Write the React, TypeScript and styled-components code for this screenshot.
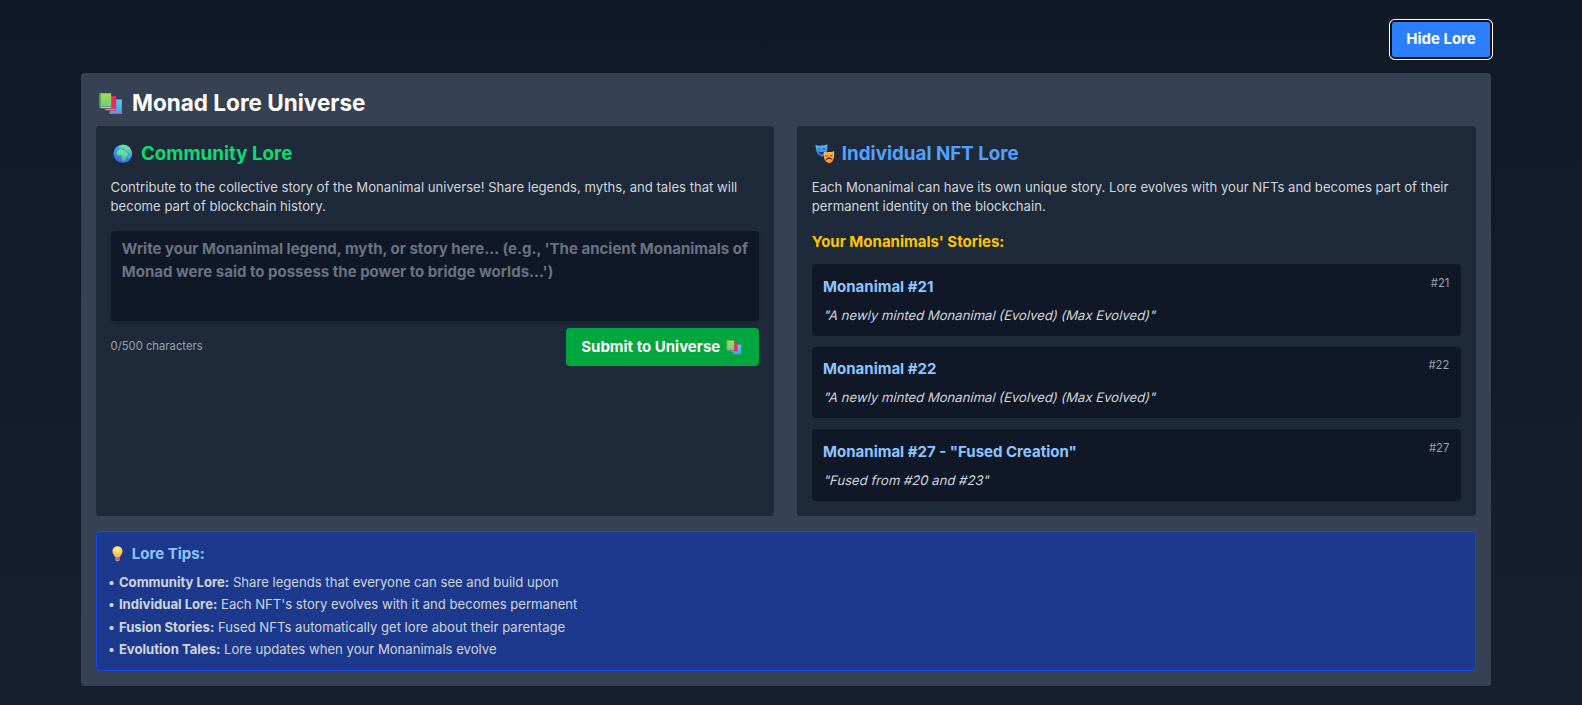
import React from "react";
import styled, { createGlobalStyle } from "styled-components";

const GlobalStyle = createGlobalStyle`
  *, *::before, *::after { box-sizing: border-box; }
  html { font-size: 15px; height: 100%; overflow: hidden; }
  body {
    margin: 0;
    min-height: 705px;
    font-family: Inter, "Liberation Sans", sans-serif;
    line-height: 1.5;
    color: #fff;
    background: linear-gradient(to bottom, #111827, #162030);
  }
  h2, h3, h4, p, ul { margin: 0; padding: 0; }
`;

const Page = styled.div`
  width: 1410px;
  margin-left: 80.6px;
  padding-top: 21px;
  display: flex;
  flex-direction: column;
  gap: 1rem;
`;

const Toolbar = styled.div`
  display: flex;
  justify-content: flex-end;
  margin-right: -0.4px;
`;

const Button = styled.button<{ $tone: "blue" | "green"; $focused?: boolean }>`
  border: 0;
  margin: 0;
  height: ${(p) => (p.$focused ? "37px" : "2.5rem")};
  min-width: 100px;
  justify-content: center;
  padding: 0 1rem;
  display: flex;
  align-items: center;
  border-radius: 0.25rem;
  font: 700 1rem/1.5 Inter, "Liberation Sans", sans-serif;
  white-space: nowrap;
  color: #fff;
  background: ${(p) => (p.$tone === "blue" ? "#2b7fff" : "#00a63e")};
  box-shadow: ${(p) =>
    p.$focused ? "inset 0 0 0 1px #101010, 0 0 0 1px #101010, 0 0 0 2px #fff" : "none"};
`;

const Panel = styled.section`
  padding: 1rem;
  border-radius: 0.25rem;
  background: #364153;
`;

const PanelTitle = styled.h2`
  display: flex;
  align-items: center;
  margin-bottom: 0.5rem;
  font-size: 1.5rem;
  line-height: 2rem;
  font-weight: 700;
`;

const Columns = styled.div`
  display: grid;
  grid-template-columns: 1fr 1fr;
  gap: 1.5rem;
  margin-bottom: 1rem;
`;

const Card = styled.div`
  padding: 1rem;
  border-radius: 0.25rem;
  background: #1e2939;
`;

const CardTitle = styled.h3<{ $color: string }>`
  display: flex;
  align-items: center;
  margin-bottom: 0.75rem;
  font-size: 1.25rem;
  line-height: 1.75rem;
  font-weight: 700;
  color: ${(p) => p.$color};
`;

const Intro = styled.p`
  margin-bottom: 1rem;
  font-size: 0.875rem;
  line-height: 1.25rem;
  color: #d1d5dc;
`;

const StoryInput = styled.textarea`
  display: block;
  width: 100%;
  height: 6rem;
  padding: 0.5rem 0.75rem;
  border: 0;
  border-radius: 0.25rem;
  resize: none;
  outline: none;
  overflow: hidden;
  font: 700 1rem/1.5 Inter, "Liberation Sans", sans-serif;
  color: #fff;
  background: #101828;
  box-shadow: 0 1px 3px rgba(0, 0, 0, 0.1), 0 1px 2px rgba(0, 0, 0, 0.1);
  &::placeholder { color: #6a7282; opacity: 1; }
`;

const FormFooter = styled.div`
  display: flex;
  align-items: center;
  justify-content: space-between;
  margin-top: 0.5rem;
`;

const Small = styled.span`
  font-size: 0.75rem;
  line-height: 1rem;
  color: #99a1af;
`;

const SubTitle = styled.h4<{ $color: string; $gap: string }>`
  display: flex;
  align-items: center;
  margin-bottom: ${(p) => p.$gap};
  font-size: 1rem;
  line-height: 1.5rem;
  font-weight: 700;
  color: ${(p) => p.$color};
`;

const Stories = styled.div`
  display: flex;
  flex-direction: column;
  gap: 0.75rem;
`;

const Story = styled.article`
  padding: 0.75rem;
  border-radius: 0.25rem;
  background: #101828;
`;

const StoryHead = styled.div`
  display: flex;
  justify-content: space-between;
  align-items: flex-start;
`;

/* Slants the upright letterforms, keeping the double-storey "a". */
const StoryText = styled.p`
  font-size: 0.875rem;
  line-height: 1.25rem;
  transform: skewX(-14deg);
  transform-origin: 0 75%;
  color: #d1d5dc;
`;

const Tips = styled.div`
  padding: 0.75rem;
  border: 1px solid #1447e6;
  border-radius: 0.25rem;
  background: #1c398e;
`;

const TipList = styled.ul`
  display: flex;
  flex-direction: column;
  gap: 0.25rem;
  list-style: none;
  font-size: 0.875rem;
  line-height: 1.25rem;
  color: #d1d5dc;
`;

const Emoji = styled.span<{ $width: number }>`
  display: inline-flex;
  justify-content: flex-start;
  flex: none;
  width: ${(p) => p.$width}em;
  padding-left: 0.15em;
  svg { width: 1.04em; height: 1.04em; overflow: visible; display: block; }
`;

const Books = ({ id, width }: { id: string; width: number }) => (
  <Emoji $width={width}>
    <svg viewBox="0 0 24 24">
      <defs>
        <linearGradient id={`${id}g`} x1="0" y1="0" x2="0" y2="1">
          <stop offset="0" stopColor="#a4dc4e" />
          <stop offset="1" stopColor="#6fc98a" />
        </linearGradient>
        <linearGradient id={`${id}b`} x1="0" y1="0" x2="0" y2="1">
          <stop offset="0" stopColor="#52cdf5" />
          <stop offset="1" stopColor="#37a5ef" />
        </linearGradient>
      </defs>
      <g transform="translate(0 .7)">
        <path d="M11 8h12.5v14.5H11z" fill={`url(#${id}b)`} />
        <path d="M10.5 20.8h13v1.9h-12.2z" fill="#8a86cf" />
        <path d="M5.500 4.500h12.200v14H5.500z" fill="#e62d60" />
        <path d="M5.500 17.300h12.200v2.200H6.800z" fill="#c73670" />
        <path d="M7 17.700h10.700v.8H7z" fill="#d9a3c9" />
        <path d="M.5 1.500h12v15H1.500q-1-.2-1-1.200z" fill={`url(#${id}g)`} />
        <path d="M.5 1.500h1.300v14H.5z" fill="#519a35" />
        <path d="M.8 15.300h11.700v1.900H1.500q-1-.6-.7-1.900z" fill="#3f806e" />
        <path d="M1.600 15.700h10.900v.8H1.600z" fill="#d4dfe7" />
      </g>
    </svg>
  </Emoji>
);

const Globe = () => (
  <Emoji $width={1.62}>
    <svg viewBox="0 0 24 24">
      <defs>
        <linearGradient id="sea" x1=".8" y1="0" x2=".3" y2="1">
          <stop offset="0" stopColor="#3cb8ff" />
          <stop offset=".5" stopColor="#389cf0" />
          <stop offset="1" stopColor="#405fc9" />
        </linearGradient>
        <linearGradient id="land" x1=".8" y1="0" x2=".4" y2="1">
          <stop offset="0" stopColor="#71f5a8" />
          <stop offset="1" stopColor="#4cae83" />
        </linearGradient>
        <clipPath id="disc"><circle cx="12" cy="12" r="11.500" /></clipPath>
      </defs>
      <circle cx="12" cy="12" r="11.500" fill="url(#sea)" />
      <g clipPath="url(#disc)" fill="url(#land)">
        <path d="M4.500 10.500Q5 8 7.500 7.500l3-.5 2 1 2.800.2 1.400 2.800 2.300 1-1.500 2.500-1.500 1.500-.5 2.500-2.500 2.500-1.500-.5-.8-5-1-1.500-3.200.2-2.500-2z" />
        <path d="M7 5l1-2.500L12 .5l3.500 0 5 2.500 3 6v5l-1.500-.5-1-3-1.500 1-2-1.500-1-2.500-3-.5-2-1.500-1.500 1.500-2 .5z" />
        <path d="M19.500 15.500l1.200-1 .2 2-1 1.800z" />
      </g>
    </svg>
  </Emoji>
);

const Masks = () => (
  <Emoji $width={1.6}>
    <svg viewBox="0 0 24 24">
      <defs>
        <linearGradient id="joy" x1="0" y1="0" x2="0" y2="1">
          <stop offset="0" stopColor="#55bdf7" />
          <stop offset="1" stopColor="#3680e6" />
        </linearGradient>
        <linearGradient id="sad" x1="0" y1="0" x2="0" y2="1">
          <stop offset="0" stopColor="#ffc04c" />
          <stop offset="1" stopColor="#f7922f" />
        </linearGradient>
      </defs>
      <path d="M.5 1q3.500 1.700 7.200.8Q11.500 2.500 15 .3q.7 5-.4 9-1.500 5.500-5.600 6-4.500-.5-6.700-5Q.7 6 .5 1z" fill="url(#joy)" />
      <path d="M3 6.600q1.600-1.900 3.500-.1M9.200 6.400q1.700-1.900 3.400-.2" fill="none" stroke="#1d438c" strokeWidth="1.200" />
      <path d="M3.500 9.300q4.600 1.300 9-.3-1 3.900-4 4-3-.1-5-3.700z" fill="#173b80" />
      <path d="M10.800 9.200q3.300 1.400 6 .7 3.800.3 6.700-1.400.7 5-.4 9-1.300 5-5.200 6.100-4.400-.3-6.300-4.700-1.100-4-.8-9.700z" fill="url(#sad)" />
      <path d="M12.600 14.300q1.600 1.500 3.100-.1M18.300 14q1.700 1.300 3.200-.4" fill="none" stroke="#773d23" strokeWidth="1.200" />
      <path d="M13.300 20.500q.4-4.200 4-4.300 3.200-.1 4.200 3.700-2-1.400-4-1.300-2.200 0-4.200 1.900z" fill="#692e26" />
    </svg>
  </Emoji>
);

const Bulb = () => (
  <Emoji $width={1.6}>
    <svg viewBox="0 0 24 24">
      <defs>
        <radialGradient id="glow" cx=".5" cy=".25" r=".8">
          <stop offset="0" stopColor="#fff2a8" />
          <stop offset=".45" stopColor="#ffd45a" />
          <stop offset="1" stopColor="#f9a83a" />
        </radialGradient>
      </defs>
      <path d="M11.500.5c-4.700 0-7.800 3.400-7.800 7.500 0 4.200 3 6 4.300 9.500h7c1.300-3.500 4.300-5.300 4.300-9.500 0-4.100-3.100-7.500-7.800-7.500z" fill="url(#glow)" />
      <path d="M8.300 17.500h6.400v4q-.5 2-3.200 2t-3.200-2z" fill="#a9a0b4" />
      <path d="M8.300 19.500h6.400v1.300H8.300z" fill="#6c5c82" />
    </svg>
  </Emoji>
);

const stories = [
  { id: "#21", name: "Monanimal #21", text: '"A newly minted Monanimal (Evolved) (Max Evolved)"' },
  { id: "#22", name: "Monanimal #22", text: '"A newly minted Monanimal (Evolved) (Max Evolved)"' },
  { id: "#27", name: 'Monanimal #27 - "Fused Creation"', text: '"Fused from #20 and #23"' },
];

const tips = [
  ["Community Lore:", "Share legends that everyone can see and build upon"],
  ["Individual Lore:", "Each NFT's story evolves with it and becomes permanent"],
  ["Fusion Stories:", "Fused NFTs automatically get lore about their parentage"],
  ["Evolution Tales:", "Lore updates when your Monanimals evolve"],
];

export default function App() {
  return (
    <>
      <GlobalStyle />
      <Page>
        <Toolbar>
          <Button $tone="blue" $focused>Hide Lore</Button>
        </Toolbar>
        <Panel>
          <PanelTitle><Books id="title" width={1.62} />Monad Lore Universe</PanelTitle>
          <Columns>
            <Card>
              <CardTitle $color="#05df72"><Globe />Community Lore</CardTitle>
              <Intro>
                Contribute to the collective story of the Monanimal universe! Share legends, myths, and tales that will become part of blockchain history.
              </Intro>
              <StoryInput placeholder="Write your Monanimal legend, myth, or story here... (e.g., 'The ancient Monanimals of Monad were said to possess the power to bridge worlds...')" />
              <FormFooter>
                <Small>0/500 characters</Small>
                <Button $tone="green">Submit to Universe&nbsp;<Books id="submit" width={1.37} /></Button>
              </FormFooter>
            </Card>
            <Card>
              <CardTitle $color="#51a2ff"><Masks />Individual NFT Lore</CardTitle>
              <Intro>
                Each Monanimal can have its own unique story. Lore evolves with your NFTs and becomes part of their permanent identity on the blockchain.
              </Intro>
              <SubTitle $color="#fdc700" $gap="0.75rem">Your Monanimals' Stories:</SubTitle>
              <Stories>
                {stories.map((s) => (
                  <Story key={s.id}>
                    <StoryHead>
                      <SubTitle $color="#8ec5ff" $gap="0.5rem">{s.name}</SubTitle>
                      <Small>{s.id}</Small>
                    </StoryHead>
                    <StoryText>{s.text}</StoryText>
                  </Story>
                ))}
              </Stories>
            </Card>
          </Columns>
          <Tips>
            <SubTitle $color="#8ec5ff" $gap="0.5rem"><Bulb />Lore Tips:</SubTitle>
            <TipList>
              {tips.map(([name, text]) => (
                <li key={name}>• <strong>{name}</strong> {text}</li>
              ))}
            </TipList>
          </Tips>
        </Panel>
      </Page>
    </>
  );
}
